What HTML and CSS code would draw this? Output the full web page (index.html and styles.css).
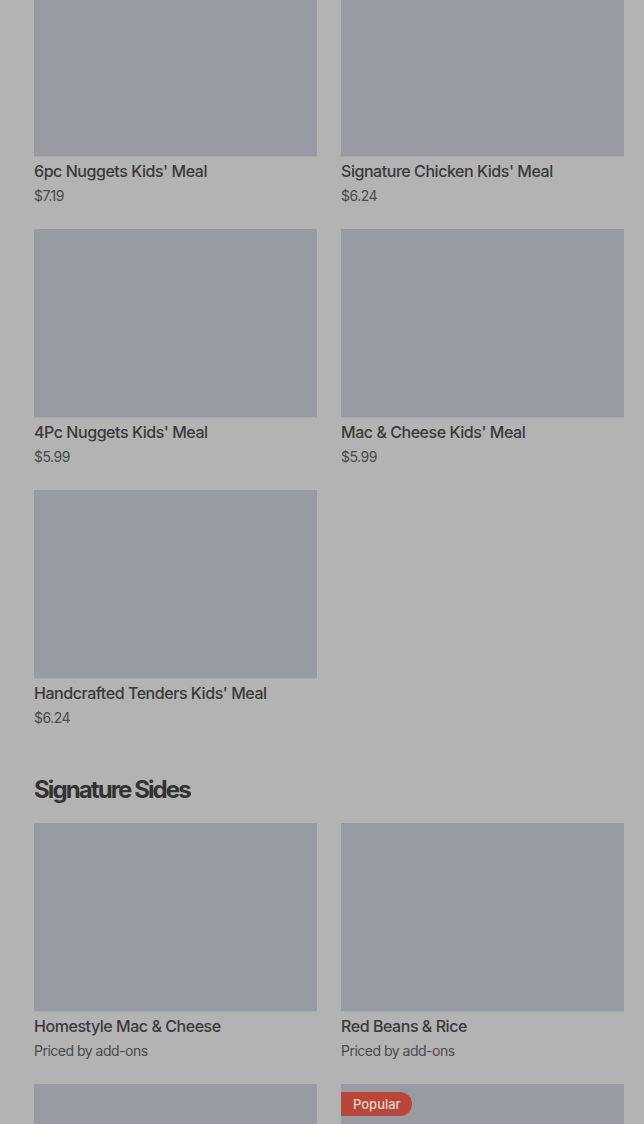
FILE: index.html
```html
<!DOCTYPE html>
<html lang="en">
<head>
<meta charset="utf-8">
<title>Menu</title>
<link rel="stylesheet" href="styles.css">
</head>
<body>
<main class="menu">
  <section class="section first">
    <div class="grid">
      <article class="card">
        <div class="thumb"></div>
        <h3 class="name">6pc Nuggets Kids' Meal</h3>
        <p class="price">$7.19</p>
      </article>
      <article class="card">
        <div class="thumb"></div>
        <h3 class="name">Signature Chicken Kids' Meal</h3>
        <p class="price">$6.24</p>
      </article>
      <article class="card">
        <div class="thumb"></div>
        <h3 class="name">4Pc Nuggets Kids' Meal</h3>
        <p class="price">$5.99</p>
      </article>
      <article class="card">
        <div class="thumb"></div>
        <h3 class="name">Mac &amp; Cheese Kids' Meal</h3>
        <p class="price">$5.99</p>
      </article>
      <article class="card">
        <div class="thumb"></div>
        <h3 class="name">Handcrafted Tenders Kids' Meal</h3>
        <p class="price">$6.24</p>
      </article>
    </div>
  </section>
  <section class="section">
    <h2 class="heading">Signature Sides</h2>
    <div class="grid">
      <article class="card">
        <div class="thumb"></div>
        <h3 class="name">Homestyle Mac &amp; Cheese</h3>
        <p class="price">Priced by add-ons</p>
      </article>
      <article class="card">
        <div class="thumb"></div>
        <h3 class="name">Red Beans &amp; Rice</h3>
        <p class="price">Priced by add-ons</p>
      </article>
      <article class="card">
        <div class="thumb"></div>
      </article>
      <article class="card">
        <div class="thumb"><span class="badge">Popular</span></div>
      </article>
    </div>
  </section>
</main>
</body>
</html>
```

FILE: styles.css
```css
html, body {
  margin: 0;
  padding: 0;
  background: #b3b3b3;
  height: 1124px;
  overflow: hidden;
}
body {
  font-family: Inter, "Liberation Sans", sans-serif;
  color: #3a3a3a;
}
.menu {
  padding: 0 20px 0 34px;
  margin-top: -32px;
}
.section.first {
  margin-bottom: 47px;
}
.grid {
  display: grid;
  grid-template-columns: 283px 283px;
  column-gap: 24px;
  row-gap: 23px;
}
.card {
  display: flex;
  flex-direction: column;
}
.thumb {
  position: relative;
  height: 188px;
  background: #989ba2;
  box-shadow: 0 1px 0 rgba(0,0,0,0.05);
}
.name {
  margin: 4px 0 0;
  font-size: 16px;
  line-height: 22px;
  font-weight: 500;
  color: #3a3a3a;
  letter-spacing: -0.45px;
}
.price {
  margin: 4px 0 0;
  font-size: 14px;
  line-height: 20px;
  color: #4a4a4a;
  letter-spacing: -0.5px;
}
.heading {
  margin: 0 0 18px;
  font-size: 24px;
  line-height: 30px;
  font-weight: 700;
  letter-spacing: -1.9px;
  color: #333333;
}
.badge {
  position: absolute;
  top: 8px;
  left: 0;
  height: 24px;
  line-height: 24px;
  padding: 0 11px 0 12px;
  font-size: 13px;
  font-weight: 500;
  color: #e6d2cc;
  background: #b9463a;
  border-radius: 0 12px 12px 0;
}
```
